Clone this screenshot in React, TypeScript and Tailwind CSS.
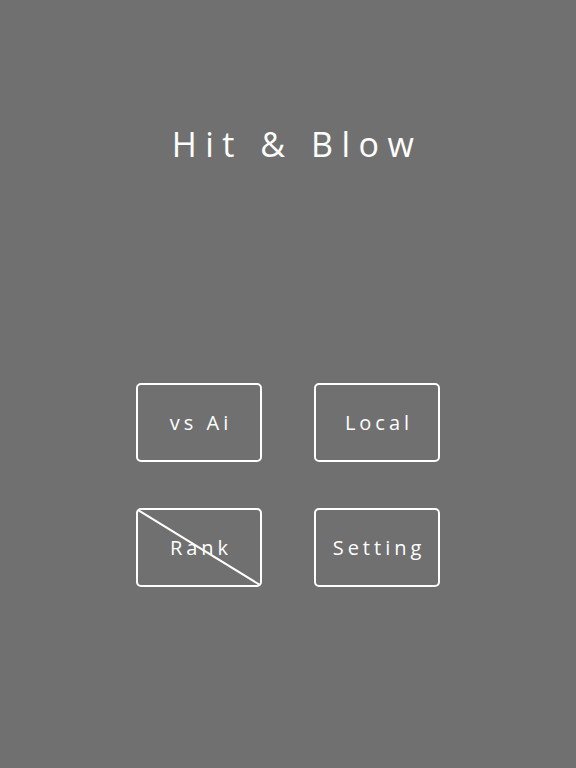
import React from 'react';

function MenuButton({ label, disabled }: { label: string; disabled?: boolean }) {
    return (
        <button className="relative flex h-[79px] w-[126px] items-center justify-center rounded-[5px] border-2 border-white text-[20px] tracking-[0.2em] text-white">
            <span className="pl-[0.2em]">{label}</span>
            {disabled && (
                <svg className="absolute inset-0 h-full w-full" viewBox="0 0 122 75" preserveAspectRatio="none">
                    <line x1="0" y1="0" x2="122" y2="75" stroke="white" strokeWidth="2" />
                </svg>
            )}
        </button>
    );
}

export default function App() {
    return (
        <div
            className="flex h-[768px] w-full flex-col items-center bg-[#707070]"
            style={{ fontFamily: '"Open Sans", "Noto Sans", sans-serif' }}
        >
            <h1 className="mt-[119px] pl-[18px] text-[34px] font-normal tracking-[0.25em] text-white">Hit &amp; Blow</h1>
            <div className="mt-[213px] grid grid-cols-2 gap-x-[52px] gap-y-[46px]">
                <MenuButton label="vs Ai" />
                <MenuButton label="Local" />
                <MenuButton label="Rank" disabled />
                <MenuButton label="Setting" />
            </div>
        </div>
    );
}
